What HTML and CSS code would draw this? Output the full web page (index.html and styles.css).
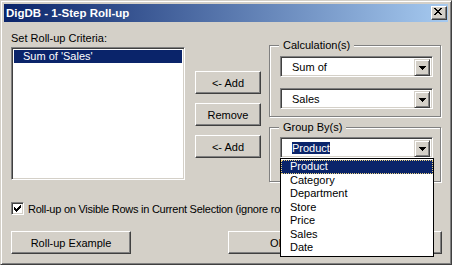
FILE: index.html
```html
<!DOCTYPE html>
<html lang="en">
<head>
  <meta charset="UTF-8" />
  <title>DigDB - 1-Step Roll-up</title>
  <link rel="stylesheet" href="styles.css">
</head>
<body>

  <div class="window">
    <div class="titlebar">
      <span class="title">DigDB - 1-Step Roll-up</span>
      <button class="close-btn">
        <svg width="8" height="7" viewBox="0 0 8 7" shape-rendering="crispEdges">
          <path d="M0 0h2v1h-2z M6 0h2v1h-2z M1 1h2v1h-2z M5 1h2v1h-2z M2 2h4v1h-4z M3 3h2v1h-2z M2 4h4v1h-4z M1 5h2v1h-2z M5 5h2v1h-2z M0 6h2v1h-2z M6 6h2v1h-2z" fill="#000"/>
        </svg>
      </button>
    </div>

    <div class="content">
      <div class="main-row">
        <div class="criteria">
          <div class="label">Set Roll-up Criteria:</div>
          <div class="listbox">
            <div class="list-item selected">Sum of 'Sales'</div>
          </div>
        </div>

        <div class="mid-buttons">
          <button class="btn">&lt;- Add</button>
          <button class="btn">Remove</button>
          <button class="btn">&lt;- Add</button>
        </div>

        <div class="groups">
          <fieldset class="group calc">
            <legend>Calculation(s)</legend>
            <div class="combo">
              <div class="combo-text">Sum of</div>
              <div class="combo-btn">
                <svg width="7" height="4" viewBox="0 0 7 4" shape-rendering="crispEdges"><path d="M0 0h7v1h-7z M1 1h5v1h-5z M2 2h3v1h-3z M3 3h1v1h-1z" fill="#000"/></svg>
              </div>
            </div>
            <div class="combo">
              <div class="combo-text">Sales</div>
              <div class="combo-btn">
                <svg width="7" height="4" viewBox="0 0 7 4" shape-rendering="crispEdges"><path d="M0 0h7v1h-7z M1 1h5v1h-5z M2 2h3v1h-3z M3 3h1v1h-1z" fill="#000"/></svg>
              </div>
            </div>
          </fieldset>

          <fieldset class="group groupby">
            <legend>Group By(s)</legend>
            <div class="combo">
              <div class="combo-text"><span class="text-sel">Product</span></div>
              <div class="combo-btn">
                <svg width="7" height="4" viewBox="0 0 7 4" shape-rendering="crispEdges"><path d="M0 0h7v1h-7z M1 1h5v1h-5z M2 2h3v1h-3z M3 3h1v1h-1z" fill="#000"/></svg>
              </div>
              <!-- open drop-down list -->
              <div class="dropdown">
                <div class="dd-item active">Product</div>
                <div class="dd-item">Category</div>
                <div class="dd-item">Department</div>
                <div class="dd-item">Store</div>
                <div class="dd-item">Price</div>
                <div class="dd-item">Sales</div>
                <div class="dd-item">Date</div>
              </div>
            </div>
          </fieldset>
        </div>
      </div>

      <div class="check-row">
        <span class="checkbox">
          <svg width="7" height="7" viewBox="0 0 7 7" shape-rendering="crispEdges"><path d="M6 0h1v3h-1z M5 1h1v3h-1z M4 2h1v3h-1z M3 3h1v3h-1z M2 4h1v3h-1z M1 3h1v3h-1z M0 2h1v3h-1z" fill="#000"/></svg>
        </span>
        <span class="check-label">Roll-up on Visible Rows in Current Selection (ignore rows hidden by filters)</span>
      </div>

      <div class="bottom-row">
        <button class="btn wide">Roll-up Example</button>
        <button class="btn ok">OK</button>
        <button class="btn cancel">Cancel</button>
      </div>
    </div>
  </div>

</body>
</html>
```

FILE: styles.css
```css
body {
  margin: 0;
  background-color: #d4d0c8;
  font-family: "Liberation Sans", Arial, sans-serif;
  font-size: 11px;
  color: #000;
}
.window {
  width: 452px;
  height: 265px;
  box-sizing: border-box;
  border: 1px solid;
  border-color: #d4d0c8 #404040 #404040 #d4d0c8;
  box-shadow: inset 1px 1px #fff, inset -1px -1px #808080;
  padding: 3px;
  background-color: #d4d0c8;
  display: flex;
  flex-direction: column;
}
.titlebar {
  height: 18px;
  display: flex;
  align-items: center;
  padding-left: 2px;
  background: linear-gradient(to right, #0a246a, #a6caf0);
}
.title {
  flex: 1;
  color: #fff;
  font-weight: bold;
  font-size: 11.5px;
}
.close-btn {
  width: 16px;
  height: 14px;
  margin-right: 1px;
  padding: 1px 0 0 2px;
  display: flex;
  align-items: flex-start;
  border: 1px solid;
  border-color: #fff #404040 #404040 #fff;
  box-shadow: inset -1px -1px #808080;
  background-color: #d4d0c8;
}
.close-btn svg {
  display: block;
}

.content {
  padding: 10px 6px 0 7px;
}
.main-row {
  display: flex;
  align-items: flex-start;
  height: 151px;
}
.criteria {
  width: 174px;
}
.label {
  height: 13px;
  line-height: 13px;
  margin-bottom: 2px;
}
.listbox {
  height: 133px;
  box-sizing: border-box;
  padding: 2px;
  border: 1px solid;
  border-color: #808080 #fff #fff #808080;
  box-shadow: inset 1px 1px #404040, inset -1px -1px #d4d0c8;
  background-color: #fff;
}
.list-item {
  line-height: 13px;
  padding-left: 9px;
}
.list-item.selected {
  background-color: #0a246a;
  color: #fff;
}

.mid-buttons {
  width: 66px;
  margin: 39px 0 0 10px;
  display: flex;
  flex-direction: column;
  gap: 9px;
}
.btn {
  height: 23px;
  padding: 0;
  font: inherit;
  color: #000;
  border: 1px solid;
  border-color: #fff #404040 #404040 #fff;
  box-shadow: inset -1px -1px #808080;
  background-color: #d4d0c8;
}

.groups {
  width: 172px;
  margin: 7px 0 0 8px;
}
.group {
  margin: 0;
  min-width: 0;
  padding: 4px 7px 7px 10px;
  border: 1px solid #808080;
  box-shadow: inset 1px 1px #fff, 1px 1px #fff;
}
.group legend {
  padding: 0 4px;
  margin-left: -1px;
  line-height: 13px;
  background-color: #d4d0c8;
}
.calc .combo + .combo {
  margin-top: 11px;
}
.groupby {
  margin-top: 4px;
  padding: 3px 7px 23px 10px;
}

.combo {
  position: relative;
  height: 21px;
  box-sizing: border-box;
  padding: 2px;
  display: flex;
  border: 1px solid;
  border-color: #808080 #fff #fff #808080;
  box-shadow: inset 1px 1px #404040, inset -1px -1px #d4d0c8;
  background-color: #fff;
}
.combo-text {
  flex: 1;
  padding-left: 9px;
  line-height: 17px;
}
.text-sel {
  background-color: #0a246a;
  color: #fff;
}
.combo-btn {
  width: 16px;
  height: 17px;
  box-sizing: border-box;
  display: flex;
  align-items: center;
  justify-content: center;
  border: 1px solid;
  border-color: #d4d0c8 #404040 #404040 #d4d0c8;
  box-shadow: inset 1px 1px #fff, inset -1px -1px #808080;
  background-color: #d4d0c8;
}
.combo-btn svg {
  display: block;
}
.dropdown {
  position: absolute;
  left: -1px;
  top: 20px;
  width: 154px;
  box-sizing: border-box;
  padding: 1px 0;
  border: 1px solid #000;
  background-color: #fff;
  z-index: 10;
}
.dd-item {
  line-height: 13.5px;
  padding-left: 9px;
}
.dd-item.active {
  background-color: #0a246a;
  color: #fff;
  outline: 1px dotted #e8d080;
  outline-offset: -1px;
}

.check-row {
  height: 13px;
  margin-top: 19px;
  display: flex;
  align-items: center;
  white-space: nowrap;
}
.checkbox {
  width: 13px;
  height: 13px;
  box-sizing: border-box;
  padding: 2px;
  margin-right: 4px;
  border: 1px solid;
  border-color: #808080 #fff #fff #808080;
  box-shadow: inset 1px 1px #404040, inset -1px -1px #d4d0c8;
  background-color: #fff;
}
.checkbox svg {
  display: block;
}
.check-label {
  letter-spacing: -0.25px;
}

.bottom-row {
  display: flex;
  margin-top: 16px;
}
.btn.wide {
  width: 120px;
}
.btn.ok {
  width: 100px;
  margin-left: 97px;
}
.btn.cancel {
  width: 100px;
  margin-left: 14px;
}
```
